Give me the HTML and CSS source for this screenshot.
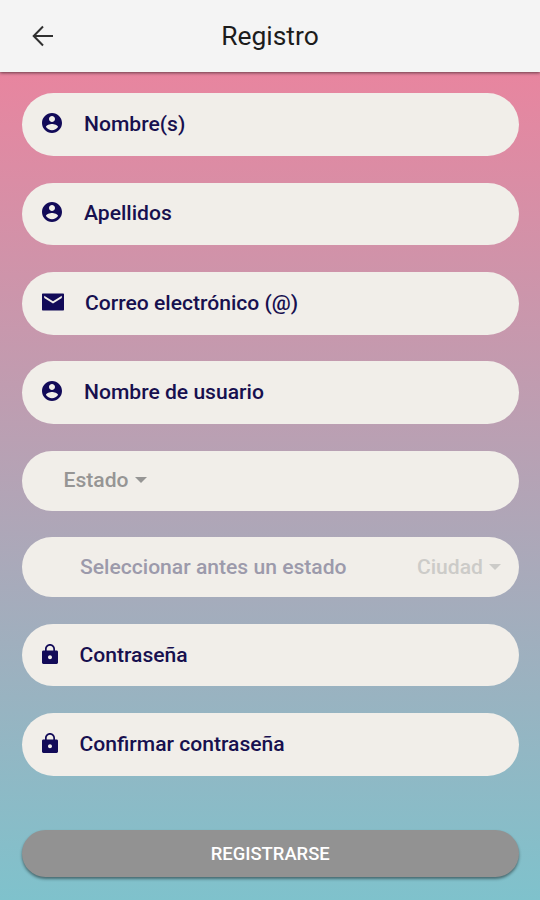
FILE: index.html
```html
<!DOCTYPE html>
<html lang="es">
<head>
<meta charset="UTF-8" />
<meta name="viewport" content="width=device-width, initial-scale=1" />
<title>Registro</title>
<link rel="stylesheet" href="styles.css">
</head>
<body>
  <svg class="sprite" aria-hidden="true">
    <symbol id="icono-usuario" viewBox="0 0 24 24">
      <path d="M12 2C6.48 2 2 6.48 2 12s4.48 10 10 10 10-4.48 10-10S17.52 2 12 2zm0 3c1.66 0 3 1.34 3 3s-1.34 3-3 3-3-1.34-3-3 1.34-3 3-3zm0 14.2c-2.5 0-4.71-1.28-6-3.22.03-1.99 4-3.08 6-3.08 1.99 0 5.97 1.09 6 3.08-1.29 1.94-3.5 3.22-6 3.22z"/>
    </symbol>
    <symbol id="icono-candado" viewBox="0 0 24 24">
      <path fill-rule="evenodd" d="M18.6 8.5H17V7c0-2.76-2.24-5-5-5S7 4.24 7 7v1.5H5.4c-.8 0-1.4.6-1.4 1.4v10.7c0 .8.6 1.4 1.4 1.4h13.2c.8 0 1.4-.6 1.4-1.4V9.9c0-.8-.6-1.4-1.4-1.4zM8.7 7c0-1.82 1.48-3.3 3.3-3.3s3.3 1.48 3.3 3.3v1.5H8.7V7zM12 17.2c-1.1 0-2-.9-2-2s.9-2 2-2 2 .9 2 2-.9 2-2 2z"/>
    </symbol>
  </svg>

  <header class="header">
    <a class="volver" href="#" aria-label="Volver">
      <svg width="22" height="22" viewBox="0 0 22 22"><path d="M21 11H2M11 1.5L1.7 11l9.3 9.5"/></svg>
    </a>
    <h1>Registro</h1>
  </header>

  <main class="container">
    <form id="formRegistro" novalidate>
      <div class="campo">
        <svg class="icono"><use href="#icono-usuario"/></svg>
        <span class="texto">Nombre(s)</span>
      </div>
      <div class="campo">
        <svg class="icono"><use href="#icono-usuario"/></svg>
        <span class="texto">Apellidos</span>
      </div>
      <div class="campo correo">
        <svg class="icono" viewBox="0 0 26 24"><path d="M23 3.5H3c-.6 0-1 .4-1 1v15c0 .6.4 1 1 1h20c.6 0 1-.4 1-1v-15c0-.6-.4-1-1-1zM21.8 8L13 13.4 4.2 8V5.8l8.8 5.4 8.8-5.4V8z"/></svg>
        <span class="texto">Correo electrónico (@)</span>
      </div>
      <div class="campo">
        <svg class="icono"><use href="#icono-usuario"/></svg>
        <span class="texto">Nombre de usuario</span>
      </div>
      <div class="campo selector estado">
        <span class="texto">Estado</span>
        <span class="flecha"></span>
      </div>
      <div class="campo selector ciudad">
        <span class="aviso">Seleccionar antes un estado</span>
        <span class="texto">Ciudad</span>
        <span class="flecha"></span>
      </div>
      <div class="campo clave">
        <svg class="icono"><use href="#icono-candado"/></svg>
        <span class="texto">Contraseña</span>
      </div>
      <div class="campo clave">
        <svg class="icono"><use href="#icono-candado"/></svg>
        <span class="texto">Confirmar contraseña</span>
      </div>

      <button type="submit">REGISTRARSE</button>
    </form>
  </main>
</body>
</html>
```
FILE: styles.css
```css
* {
  box-sizing: border-box;
}
body {
  font-family: Roboto, "Liberation Sans", sans-serif;
  display: flex;
  flex-direction: column;
  min-height: 100vh;
  margin: 0;
}
.sprite {
  display: none;
}
.header {
  display: grid;
  grid-template-columns: 86px 1fr 86px;
  align-items: center;
  height: 72px;
  background: #f4f4f4;
  box-shadow: 0 1px 3px rgba(0,0,0,0.55);
  z-index: 1;
}
.volver {
  display: flex;
  justify-content: center;
}
.volver svg {
  fill: none;
  stroke: #303030;
  stroke-width: 2;
}
h1 {
  margin: 0;
  color: #1c1c1c;
  font-size: 26.4px;
  font-weight: 400;
  line-height: 30px;
  text-align: center;
}
.container {
  flex: 1;
  padding: 21.4px 21px 0 21.5px;
  background: linear-gradient(#e8859f, #7fc2cc);
}
#formRegistro {
  display: flex;
  flex-direction: column;
  gap: 26.7px;
}
.campo {
  display: flex;
  align-items: center;
  height: 62.6px;
  padding: 0 18px 1px 18.5px;
  border-radius: 32px;
  background: #f1eee9;
  color: #17104f;
  font-size: 21.1px;
  font-weight: 500;
  line-height: 26px;
}
.icono {
  width: 24px;
  height: 24px;
  margin: -2px 20px 0 0;
  fill: #120a58;
}
.correo .icono {
  width: 26px;
  margin-right: 19px;
}
.clave {
  padding-left: 16.5px;
}
.clave .icono {
  margin-right: 17.5px;
}
.selector {
  height: 60.3px;
  margin-bottom: -0.4px;
}
.flecha {
  margin-left: 6px;
  border: 6px solid transparent;
  border-top-color: currentColor;
  border-bottom: 0;
}
.estado {
  padding-left: 42px;
  color: #969594;
}
.ciudad {
  padding-left: 58.5px;
  color: #cccbc8;
}
.aviso {
  flex: 1;
  color: #9c9aab;
}
button {
  height: 47.6px;
  margin-top: 27.5px;
  padding: 0 0 1px;
  border: none;
  border-radius: 24px;
  background: #929292;
  box-shadow: 0 2px 3px rgba(0,0,0,0.45);
  color: #fff;
  font-family: inherit;
  font-size: 18.4px;
  font-weight: 500;
  cursor: pointer;
}
```
